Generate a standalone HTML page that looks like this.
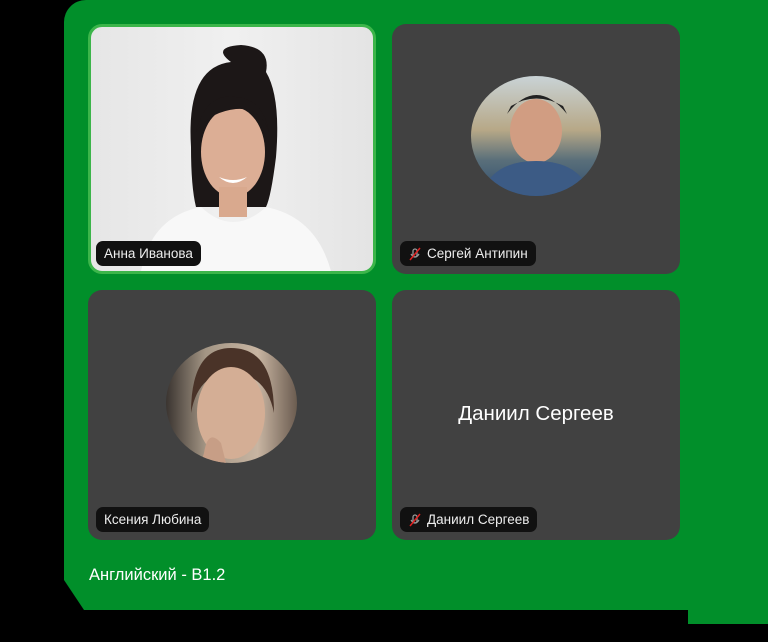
<!DOCTYPE html>
<html><head><meta charset="utf-8"><style>
*{margin:0;padding:0;box-sizing:border-box}
html,body{width:768px;height:642px;background:#000;overflow:hidden;font-family:"Liberation Sans",sans-serif}
.g1{position:absolute;left:64px;top:0;width:704px;height:610px;background:#018f2a;border-top-left-radius:22px;clip-path:polygon(0 0,100% 0,100% 100%,20px 100%,0 580px)}
.g2{position:absolute;left:688px;top:580px;width:80px;height:44px;background:#018f2a}
.t{position:absolute;width:288px;height:250px;background:#414141;border-radius:14px;overflow:hidden}
.lab{position:absolute;left:8px;bottom:8px;height:25px;background:#111;border-radius:7px;color:#eee;font-size:13.5px;line-height:25px;padding:0 8px;white-space:nowrap}
.lab svg{vertical-align:-3px;margin-right:5px}
.av{position:absolute;border-radius:50%;overflow:hidden}
</style></head><body>
<div class="g1"></div><div class="g2"></div>

<div class="t" style="left:88px;top:24px;height:250px;border:3px solid #3cb54a;background:linear-gradient(90deg,#e6e6e6,#f0f0f0 50%,#e4e4e4)">
 <svg width="282" height="244" style="position:absolute;left:0;top:0">
  <path d="M100 120 Q95 40 140 35 Q120 20 150 18 Q180 20 175 45 Q190 70 185 130 Q180 170 175 180 L105 180 Q100 160 100 120Z" fill="#1c1717"/>
  <ellipse cx="142" cy="125" rx="32" ry="45" fill="#dcae95"/>
  <path d="M105 105 Q115 65 145 70 Q172 72 178 105 Q170 80 145 82 Q118 85 105 105Z" fill="#1c1717"/>
  <rect x="128" y="160" width="28" height="30" fill="#d9a98e"/>
  <path d="M50 244 Q60 190 110 180 Q142 210 175 180 Q225 190 240 244Z" fill="#f8f8f8"/>
  <path d="M128 150 Q142 162 156 150 Q142 156 128 150Z" fill="#fff"/>
 </svg>
 <div class="lab" style="left:5px;bottom:5px">Анна Иванова</div>
</div>

<div class="t" style="left:392px;top:24px">
 <div class="av" style="left:79px;top:52px;width:130px;height:120px;background:linear-gradient(180deg,#c9d3d6 0%,#b7a887 45%,#5a6f7a 70%,#2f4d6e 100%)">
  <svg width="130" height="120"><ellipse cx="65" cy="55" rx="26" ry="32" fill="#d19d82"/><path d="M36 38 Q65 0 96 38 L92 30 Q65 15 40 30Z" fill="#222"/><path d="M10 120 Q20 85 65 85 Q110 85 120 120Z" fill="#3c5b85"/></svg>
 </div>
 <div class="lab"><svg width="14" height="14"><rect x="5" y="2" width="4" height="8" rx="2" fill="none" stroke="#999" stroke-width="1.3"/><path d="M3 7 Q7 13 11 7" fill="none" stroke="#999" stroke-width="1.3"/><line x1="2" y1="13" x2="12" y2="1" stroke="#e02020" stroke-width="1.5"/></svg>Сергей Антипин</div>
</div>

<div class="t" style="left:88px;top:290px">
 <div class="av" style="left:78px;top:53px;width:131px;height:120px;background:linear-gradient(90deg,#3a3430,#a39584 30%,#c8b5a2 70%,#6b5c50)">
  <svg width="131" height="120"><path d="M25 70 Q25 5 65 5 Q108 5 108 70 Q100 30 65 30 Q32 30 25 70Z" fill="#4a3328"/><ellipse cx="65" cy="70" rx="34" ry="46" fill="#d4ae95"/><path d="M38 110 Q42 85 55 100 L60 120 L35 120Z" fill="#c79e86"/></svg>
 </div>
 <div class="lab">Ксения Любина</div>
</div>

<div class="t" style="left:392px;top:290px">
 <div style="position:absolute;left:0;top:112px;width:288px;text-align:center;color:#fff;font-size:20.5px">Даниил Сергеев</div>
 <div class="lab"><svg width="14" height="14"><rect x="5" y="2" width="4" height="8" rx="2" fill="none" stroke="#999" stroke-width="1.3"/><path d="M3 7 Q7 13 11 7" fill="none" stroke="#999" stroke-width="1.3"/><line x1="2" y1="13" x2="12" y2="1" stroke="#e02020" stroke-width="1.5"/></svg>Даниил Сергеев</div>
</div>

<div style="position:absolute;left:89px;top:566px;color:#fff;font-size:16.5px">Английский - B1.2</div>
</body></html>
